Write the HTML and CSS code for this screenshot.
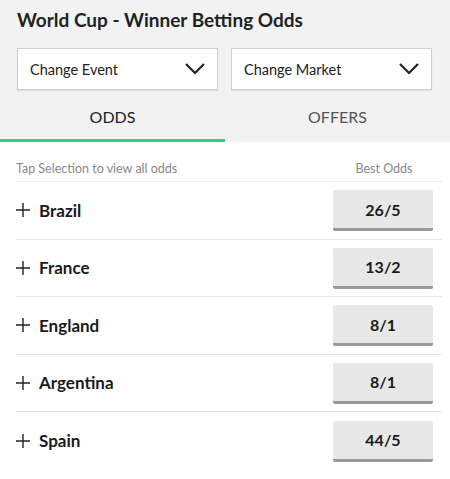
FILE: index.html
```html
<!DOCTYPE html>
<html lang="en">
<head>
    <meta charset="UTF-8">
    <meta name="viewport" content="width=device-width, initial-scale=1.0">
    <title>World Cup - Winner Betting Odds</title>
    <link rel="stylesheet" href="styles.css">
</head>
<body>
    <div class="header">
        <h1>World Cup - Winner Betting Odds</h1>
        <div class="selects">
            <div class="select">
                <span>Change Event</span>
                <svg width="22" height="14" viewBox="0 0 22 14"><path d="M2 2 L11 11 L20 2" fill="none" stroke="#222" stroke-width="2.2"/></svg>
            </div>
            <div class="select">
                <span>Change Market</span>
                <svg width="22" height="14" viewBox="0 0 22 14"><path d="M2 2 L11 11 L20 2" fill="none" stroke="#222" stroke-width="2.2"/></svg>
            </div>
        </div>
        <div class="tabs">
            <div class="tab active">ODDS</div>
            <div class="tab">OFFERS</div>
        </div>
    </div>

    <div class="list">
        <div class="list_head">
            <span>Tap Selection to view all odds</span>
            <span class="best">Best Odds</span>
        </div>
        <div class="row">
            <div class="name"><svg class="plus" width="14" height="14" viewBox="0 0 14 14"><path d="M7 0 V14 M0 7 H14" stroke="#222" stroke-width="1.4"/></svg>Brazil</div>
            <button class="odds">26/5</button>
        </div>
        <div class="row">
            <div class="name"><svg class="plus" width="14" height="14" viewBox="0 0 14 14"><path d="M7 0 V14 M0 7 H14" stroke="#222" stroke-width="1.4"/></svg>France</div>
            <button class="odds">13/2</button>
        </div>
        <div class="row">
            <div class="name"><svg class="plus" width="14" height="14" viewBox="0 0 14 14"><path d="M7 0 V14 M0 7 H14" stroke="#222" stroke-width="1.4"/></svg>England</div>
            <button class="odds">8/1</button>
        </div>
        <div class="row">
            <div class="name"><svg class="plus" width="14" height="14" viewBox="0 0 14 14"><path d="M7 0 V14 M0 7 H14" stroke="#222" stroke-width="1.4"/></svg>Argentina</div>
            <button class="odds">8/1</button>
        </div>
        <div class="row last">
            <div class="name"><svg class="plus" width="14" height="14" viewBox="0 0 14 14"><path d="M7 0 V14 M0 7 H14" stroke="#222" stroke-width="1.4"/></svg>Spain</div>
            <button class="odds">44/5</button>
        </div>
    </div>
</body>
</html>
```

FILE: styles.css
```css
* {
    margin: 0;
    padding: 0;
    box-sizing: border-box;
}
body {
    font-family: Lato, "Noto Sans", sans-serif;
    color: #1e1e1e;
    background: #fff;
}
.header {
    background: #f2f2f2;
    padding-top: 8px;
}
h1 {
    font-size: 19px;
    font-weight: 700;
    padding-left: 17px;
    height: 40px;
    color: #222;
}
.selects {
    display: flex;
    gap: 13px;
    padding: 0 18px 0 17px;
}
.select {
    flex: 1;
    height: 42px;
    background: #fff;
    border: 1px solid #d0d0d0;
    box-shadow: 0 1px 1px rgba(0, 0, 0, 0.08);
    display: flex;
    align-items: center;
    justify-content: space-between;
    padding: 0 11px 0 12px;
    font-size: 14.5px;
    color: #222;
}
.tabs {
    display: flex;
    margin-top: 10px;
}
.tab {
    flex: 1;
    text-align: center;
    font-size: 16px;
    color: #555;
    height: 42px;
    padding-top: 7px;
    border-bottom: 3px solid transparent;
}
.tab.active {
    color: #222;
    border-bottom-color: #35cc85;
}
.list {
    padding: 0 8px 0 16px;
}
.list_head {
    display: flex;
    justify-content: space-between;
    font-size: 12.5px;
    color: #888;
    height: 40px;
    padding-top: 19px;
    border-bottom: 1px solid #ededed;
}
.list_head .best {
    width: 116px;
    text-align: center;
}
.row {
    display: flex;
    align-items: center;
    justify-content: space-between;
    height: 57.5px;
    border-bottom: 1px solid #e6e6e6;
}
.row.last {
    border-bottom: none;
}
.name {
    font-size: 17px;
    font-weight: 700;
    color: #1a1a1a;
    display: flex;
    align-items: center;
}
.plus {
    margin-right: 9px;
}
.odds {
    width: 100px;
    height: 41px;
    margin-right: 9px;
    margin-top: 1px;
    background: #e8e8e8;
    border: none;
    border-bottom: 3px solid #999;
    border-radius: 2px;
    font-family: Lato, "Noto Sans", sans-serif;
    font-size: 16px;
    font-weight: 700;
    color: #1a1a1a;
}
```
